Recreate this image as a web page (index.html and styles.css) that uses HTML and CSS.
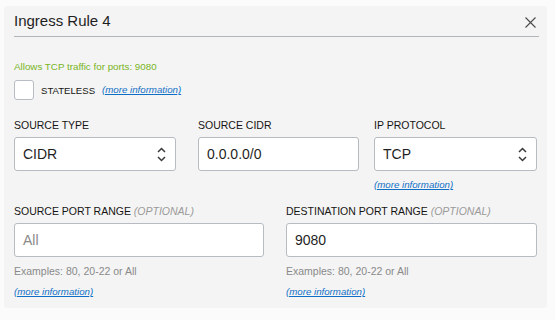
FILE: index.html
```html
<!DOCTYPE html>
<html lang="en">
<head>
  <meta charset="UTF-8">
  <title>Ingress Rule 4</title>
  <link rel="stylesheet" href="styles.css">
</head>
<body>
  <div class="panel">
    <div class="panel-head">
      <h2 class="panel-title">Ingress Rule 4</h2>
      <button class="close-btn" aria-label="Close">
        <svg width="11" height="11" viewBox="0 0 11 11"><path d="M0.5 0.5 L10.5 10.5 M10.5 0.5 L0.5 10.5" stroke="#4a4a4a" stroke-width="1.1" fill="none"/></svg>
      </button>
    </div>

    <p class="summary">Allows TCP traffic for ports: 9080</p>

    <div class="check-row">
      <span class="checkbox"></span>
      <span class="check-label">STATELESS</span>
      <a href="#" class="more">(more information)</a>
    </div>

    <div class="row row-3">
      <div class="field">
        <label class="field-label">SOURCE TYPE</label>
        <div class="select w-type">
          <span>CIDR</span>
          <svg class="arrows" width="9" height="15" viewBox="0 0 9 15"><path d="M1 5 L4.5 1.5 L8 5 M1 10 L4.5 13.5 L8 10" stroke="#3a3a3a" stroke-width="1.5" fill="none"/></svg>
        </div>
      </div>
      <div class="field">
        <label class="field-label">SOURCE CIDR</label>
        <div class="input w-cidr">0.0.0.0/0</div>
      </div>
      <div class="field">
        <label class="field-label">IP PROTOCOL</label>
        <div class="select">
          <span>TCP</span>
          <svg class="arrows" width="9" height="15" viewBox="0 0 9 15"><path d="M1 5 L4.5 1.5 L8 5 M1 10 L4.5 13.5 L8 10" stroke="#3a3a3a" stroke-width="1.5" fill="none"/></svg>
        </div>
        <a href="#" class="more more-under">(more information)</a>
      </div>
    </div>

    <div class="row row-2">
      <div class="field">
        <label class="field-label">SOURCE PORT RANGE <em class="optional">(OPTIONAL)</em></label>
        <div class="input placeholder">All</div>
        <p class="hint">Examples: 80, 20-22 or All</p>
        <a href="#" class="more">(more information)</a>
      </div>
      <div class="field">
        <label class="field-label">DESTINATION PORT RANGE <em class="optional">(OPTIONAL)</em></label>
        <div class="input">9080</div>
        <p class="hint">Examples: 80, 20-22 or All</p>
        <a href="#" class="more">(more information)</a>
      </div>
    </div>
  </div>
</body>
</html>
```

FILE: styles.css
```css
* { box-sizing: border-box; }
body {
  font-family: "Liberation Sans", Arial, sans-serif;
  background-color: #fbfbfb;
  color: #161513;
  margin: 0;
  padding: 6px 8px 12px 4px;
}
.panel {
  background: #f4f4f4;
  border-radius: 3px;
  padding: 5px 10px 9px 10px;
}
.panel-head {
  display: flex;
  align-items: center;
  justify-content: space-between;
  border-bottom: 1px solid #b1b6bc;
  margin-right: -2px;
  padding-bottom: 5px;
}
.panel-title {
  margin: 0;
  font-size: 15px;
  font-weight: normal;
  line-height: 20px;
  color: #1f1f1f;
}
.close-btn {
  background: none;
  border: none;
  padding: 0;
  margin: 2px 3px 0 0;
  display: flex;
  cursor: pointer;
}
.summary {
  margin: 23px 0 0 0;
  font-size: 9.8px;
  line-height: 14px;
  color: #79b51e;
}
.check-row {
  display: flex;
  align-items: center;
  margin-top: 6px;
}
.checkbox {
  width: 20px;
  height: 20px;
  background: #fff;
  border: 1px solid #b6bcc3;
  border-radius: 3px;
  margin-right: 7px;
}
.check-label {
  font-size: 9.6px;
  color: #161513;
  margin-right: 7px;
}
.more {
  font-size: 9.7px;
  line-height: 14px;
  font-style: italic;
  color: #0f6fc6;
  text-decoration: underline;
}
.row { display: grid; }
.row-3 {
  grid-template-columns: 184px 176px 163px;
  margin-top: 18px;
}
.row-2 {
  grid-template-columns: 250px 251px;
  column-gap: 22px;
  margin-top: 12px;
}
.field {
  display: flex;
  flex-direction: column;
  align-items: flex-start;
}
.field-label {
  font-size: 10.5px;
  line-height: 14px;
  color: #161513;
  margin-bottom: 5px;
}
.optional {
  color: #9a9a9a;
}
.input, .select {
  width: 100%;
  height: 34px;
  background: #fff;
  border: 1px solid #b7bcc2;
  border-radius: 3px;
  font-size: 14px;
  color: #1f1f1f;
  padding: 0 8px;
  display: flex;
  align-items: center;
}
.select { justify-content: space-between; }
.arrows { margin-right: 1px; }
.w-type { width: 162px; }
.w-cidr { width: 161px; }
.placeholder { color: #8a8a8a; }
.more-under { margin-top: 7px; }
.hint {
  margin: 7px 0 7px 0;
  font-size: 10.5px;
  line-height: 14px;
  color: #8a8a8a;
}
```
